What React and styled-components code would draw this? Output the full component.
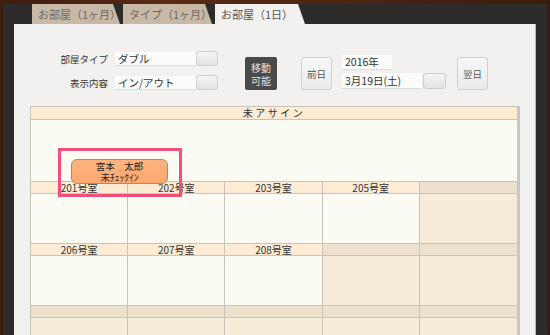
import React from "react";
import styled, { createGlobalStyle } from "styled-components";

const Global = createGlobalStyle`
  html, body { margin: 0; padding: 0; }
  body {
    background: #4a2414;
    font-family: "Noto Sans CJK JP", "Noto Sans", sans-serif;
  }
  * { box-sizing: border-box; }
`;

const Wood = styled.div`
  width: 550px;
  height: 335px;
  padding: 4px 3px 0 3px;
  background: linear-gradient(90deg, #3e1c0e, #5a2b16 30%, #4a2312 70%, #3a1a0c);
  overflow: hidden;
`;

const Dark = styled.div`
  height: 100%;
  background: #2e2b2b;
  padding: 0 11px;
  display: flex;
  flex-direction: column;
`;

const TabBar = styled.div`
  height: 20px;
  display: flex;
  gap: 3px;
  padding-left: 18px;
`;

const Tab = styled.div`
  width: ${(p) => p.$w}px;
  height: 20px;
  padding-left: 6px;
  display: flex;
  align-items: center;
  font-size: 11px;
  color: ${(p) => (p.$active ? "#555" : "#6f6964")};
  background: ${(p) => (p.$active ? "#f2f1ef" : "#c8b8a6")};
  clip-path: polygon(0 0, calc(100% - 7px) 0, 100% 100%, 0 100%);
  white-space: nowrap;
`;

const Paper = styled.div`
  flex: 1;
  background: #f2f1ef;
  border-right: 1px solid #b9b9b9;
  padding: 27px 0 0 16px;
  display: flex;
  flex-direction: column;
`;

const Controls = styled.div`
  display: flex;
  align-items: flex-end;
  height: 39px;
`;

const LeftGroup = styled.div`
  display: flex;
  flex-direction: column;
  gap: 9px;
`;

const FieldRow = styled.div`
  display: flex;
  align-items: center;
  height: 15px;
`;

const Label = styled.div`
  width: 78px;
  margin-right: 7px;
  text-align: right;
  font-size: 9.5px;
  color: #333;
  white-space: nowrap;
`;

const Field = styled.div`
  width: ${(p) => p.$w}px;
  height: ${(p) => p.$h || 14}px;
  background: #fbfbfb;
  border-bottom: 1px solid #dcdcdc;
  font-size: 10.5px;
  color: #333;
  line-height: ${(p) => (p.$h || 14) - 1}px;
  padding-left: 3px;
  white-space: nowrap;
`;

const PickBtn = styled.div`
  width: ${(p) => p.$w || 22}px;
  height: ${(p) => p.$h || 15}px;
  border: 1px solid #cfcfcf;
  border-radius: 3px;
  background: linear-gradient(#f4f4f4, #e4e4e4);
`;

const MoveBtn = styled.div`
  margin-left: 27px;
  width: 32px;
  height: 33px;
  background: #4a4a4a;
  border-radius: 2px;
  color: #e2e2e2;
  font-size: 10px;
  line-height: 13px;
  display: flex;
  flex-direction: column;
  align-items: center;
  justify-content: center;
`;

const DayBtn = styled.div`
  margin-left: ${(p) => p.$ml}px;
  width: 31px;
  height: 33px;
  border: 1px solid #d0d0d0;
  border-radius: 3px;
  background: linear-gradient(#f7f7f7, #ebebeb);
  color: #555;
  font-size: 9.5px;
  display: flex;
  align-items: center;
  justify-content: center;
`;

const DateGroup = styled.div`
  margin-left: 10px;
  margin-bottom: 1px;
  display: flex;
  flex-direction: column;
  gap: 3px;
`;

const DateRow = styled.div`
  display: flex;
  align-items: center;
  gap: 1px;
`;

const Grid = styled.div`
  position: relative;
  margin-top: 16px;
  width: 490px;
  border-top: 1px solid #c9c4ba;
  border-left: 1px solid #c9c4ba;
  border-right: 3px solid #c7c7c7;
  flex: 1;
  background: #f6ecd8;
`;

const UnHeader = styled.div`
  height: 13px;
  background: #fdebd3;
  border-bottom: 1px solid #c9c4ba;
  font-size: 10px;
  line-height: 12px;
  letter-spacing: 2.5px;
  text-align: center;
  color: #333;
`;

const UnBody = styled.div`
  height: 62px;
  background: #fbfaf3;
  border-bottom: 1px solid #c9c4ba;
`;

const RoomRow = styled.div`
  display: grid;
  grid-template-columns: repeat(5, 1fr);
`;

const HeadCell = styled.div`
  height: 12px;
  background: ${(p) => (p.$room ? "#fdebd3" : "#ebe1cc")};
  border-right: 1px solid #c9c4ba;
  border-bottom: 1px solid #c9c4ba;
  font-size: 10px;
  line-height: 11px;
  text-align: center;
  color: #333;
  &:last-child { border-right: none; }
`;

const BodyCell = styled.div`
  height: 50px;
  background: ${(p) => (p.$room ? "#fbfaf3" : "#f6ecd8")};
  border-right: 1px solid #c9c4ba;
  border-bottom: 1px solid #c9c4ba;
  &:last-child { border-right: none; }
`;

const Booking = styled.div`
  position: absolute;
  left: 40px;
  top: 52px;
  width: 97px;
  height: 25px;
  border: 1px solid #9b8f86;
  border-radius: 6px;
  background: linear-gradient(#fdb27d, #fca96f);
  color: #222;
  font-size: 9.5px;
  line-height: 11px;
  display: flex;
  flex-direction: column;
  align-items: center;
  justify-content: center;
`;

const Highlight = styled.div`
  position: absolute;
  left: 27px;
  top: 41px;
  width: 124px;
  height: 49px;
  border: 3px solid #ef5079;
  pointer-events: none;
`;

const rows = [
  ["201号室", "202号室", "203号室", "205号室", null],
  ["206号室", "207号室", "208号室", null, null],
  [null, null, null, null, null],
];

export default function App() {
  return (
    <>
      <Global />
      <Wood>
        <Dark>
          <TabBar>
            <Tab $w={88}>お部屋（1ヶ月）</Tab>
            <Tab $w={89}>タイプ（1ヶ月）</Tab>
            <Tab $w={90} $active>お部屋（1日）</Tab>
          </TabBar>
          <Paper>
            <Controls>
              <LeftGroup>
                <FieldRow>
                  <Label>部屋タイプ</Label>
                  <Field $w={81}>ダブル</Field>
                  <PickBtn />
                </FieldRow>
                <FieldRow>
                  <Label>表示内容</Label>
                  <Field $w={81}>イン/アウト</Field>
                  <PickBtn />
                </FieldRow>
              </LeftGroup>
              <MoveBtn>
                <span>移動</span>
                <span>可能</span>
              </MoveBtn>
              <DayBtn $ml={24}>前日</DayBtn>
              <DateGroup>
                <Field $w={50} $h={15}>2016年</Field>
                <DateRow>
                  <Field $w={80} $h={16}>3月19日(土)</Field>
                  <PickBtn $w={23} $h={16} />
                </DateRow>
              </DateGroup>
              <DayBtn $ml={11}>翌日</DayBtn>
            </Controls>
            <Grid>
              <UnHeader>未アサイン</UnHeader>
              <UnBody />
              {rows.map((r, i) => (
                <React.Fragment key={i}>
                  <RoomRow>
                    {r.map((name, j) => (
                      <HeadCell key={j} $room={!!name}>
                        {name}
                      </HeadCell>
                    ))}
                  </RoomRow>
                  <RoomRow>
                    {r.map((name, j) => (
                      <BodyCell key={j} $room={!!name} />
                    ))}
                  </RoomRow>
                </React.Fragment>
              ))}
              <Booking>
                <span>宮本　太郎</span>
                <span>未ﾁｪｯｸｲﾝ</span>
              </Booking>
              <Highlight />
            </Grid>
          </Paper>
        </Dark>
      </Wood>
    </>
  );
}
